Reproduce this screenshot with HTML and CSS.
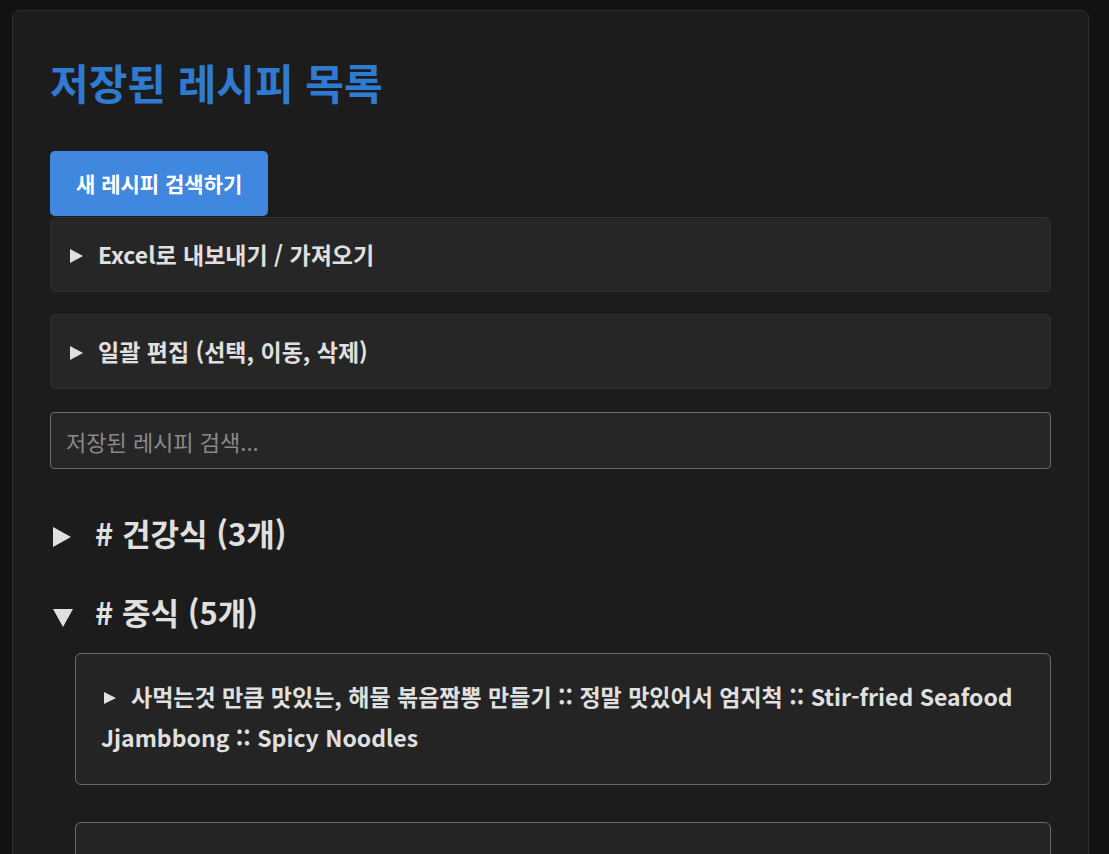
FILE: index.html
```html
<!DOCTYPE html>
<html lang="ko">
<head>
    <meta charset="UTF-8">
    <meta name="viewport" content="width=device-width, initial-scale=1.0">
    <title>저장된 레시피 목록</title>
    <link rel="stylesheet" href="styles.css">
</head>
<body>
    <div class="container">
        <h1>저장된 레시피 목록</h1>

        <button class="search-btn">새 레시피 검색하기</button>

        <details class="tool-box">
            <summary><span class="arrow"></span>Excel로 내보내기 / 가져오기</summary>
        </details>

        <details class="tool-box">
            <summary><span class="arrow"></span>일괄 편집 (선택, 이동, 삭제)</summary>
        </details>

        <input type="text" class="recipe-search" placeholder="저장된 레시피 검색...">

        <details class="category">
            <summary><span class="arrow"></span># 건강식 (3개)</summary>
        </details>

        <details class="category" open>
            <summary><span class="arrow"></span># 중식 (5개)</summary>
            <div class="recipe-list">
                <details class="recipe-card">
                    <summary><span class="arrow"></span>사먹는것 만큼 맛있는, 해물 볶음짬뽕 만들기 :: 정말 맛있어서 엄지척 :: Stir-fried Seafood Jjambbong :: Spicy Noodles</summary>
                </details>
                <details class="recipe-card">
                    <summary><span class="arrow"></span>집에서 만드는 중국집 짜장면 :: 춘장 볶는 법 :: Jjajangmyeon</summary>
                </details>
            </div>
        </details>
    </div>
</body>
</html>
```

FILE: styles.css
```css
* {
    margin: 0;
    padding: 0;
    box-sizing: border-box;
}

body {
    font-family: "Noto Sans CJK KR", "Noto Sans", sans-serif;
    background-color: #121212;
    color: #e0e0e0;
    padding: 10px 20px 0 12px;
}

.container {
    background-color: #1c1c1c;
    border: 1px solid #2f2f2f;
    border-radius: 8px;
    padding: 47px 37px 40px;
}

h1 {
    color: #2f7bd1;
    font-size: 42px;
    line-height: 48px;
    font-weight: bold;
    margin-bottom: 45px;
}

.search-btn {
    display: block;
    font-family: inherit;
    background-color: #4087e0;
    color: white;
    border: none;
    border-radius: 5px;
    font-size: 21px;
    font-weight: bold;
    line-height: 27px;
    padding: 19px 26px;
    cursor: pointer;
}

summary {
    list-style: none;
    cursor: pointer;
    font-weight: bold;
}

summary::-webkit-details-marker {
    display: none;
}

.arrow {
    display: inline-block;
    width: 0;
    height: 0;
    border-style: solid;
    border-color: transparent transparent transparent #e0e0e0;
    vertical-align: middle;
}

.tool-box {
    background-color: #262626;
    border: 1px solid #2e2e2e;
    border-radius: 5px;
    margin-top: 1px;
    margin-bottom: 22px;
}

.tool-box summary {
    font-size: 23px;
    line-height: 29px;
    padding: 22px 19px;
}

.tool-box .arrow {
    border-width: 7px 0 7px 13px;
    margin: -3px 15px 0 0;
}

.recipe-search {
    display: block;
    width: 100%;
    height: 57px;
    background-color: #262626;
    border: 1px solid #6a6a6a;
    border-radius: 4px;
    color: #e0e0e0;
    font-family: inherit;
    font-size: 22px;
    padding: 0 15px;
    margin-top: 23px;
    margin-bottom: 44px;
}

.recipe-search::placeholder {
    color: #8a8a8a;
}

.category {
    margin-bottom: 39px;
}

.category summary {
    font-size: 31px;
    line-height: 40px;
}

.category .arrow {
    border-width: 10px 0 10px 18px;
    margin: -2px 24px 0 3px;
}

.category[open] > summary .arrow {
    border-width: 18px 10px 0 10px;
    border-color: #e0e0e0 transparent transparent transparent;
    margin: 2px 22px 0 3px;
}

.recipe-list {
    margin-left: 25px;
    margin-top: 21px;
}

.recipe-card {
    background-color: #242424;
    border: 1px solid #6a6a6a;
    border-radius: 6px;
    padding: 22px 25px 26px;
    margin-bottom: 37px;
}

.recipe-card summary {
    font-size: 23px;
    line-height: 41px;
}

.recipe-card .arrow {
    border-width: 6px 0 6px 12px;
    margin: -3px 15px 0 3px;
}
```
